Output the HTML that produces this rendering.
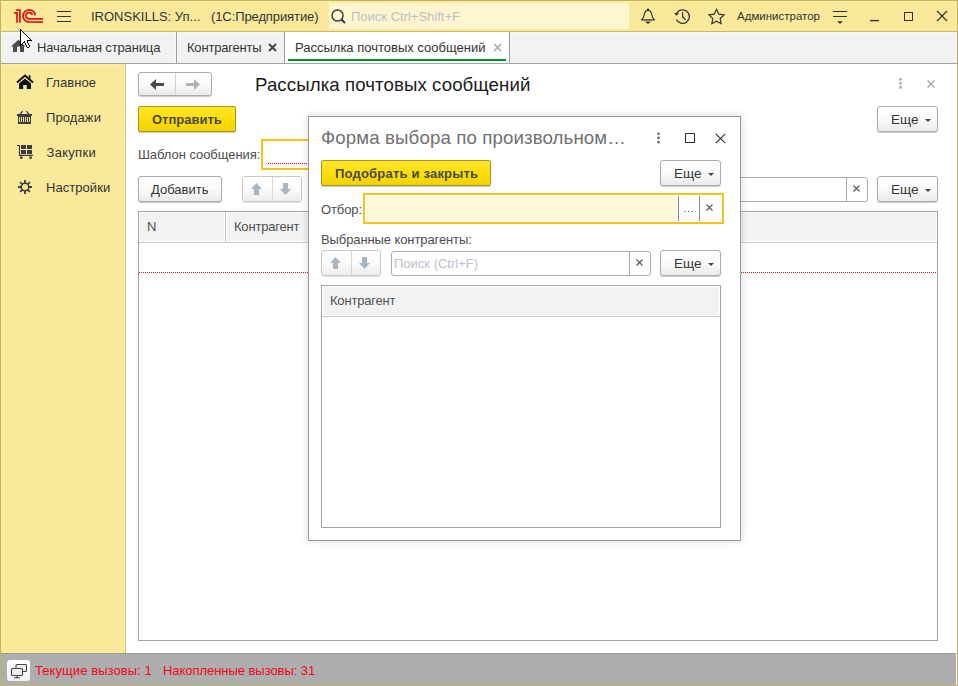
<!DOCTYPE html>
<html><head><meta charset="utf-8">
<style>
*{box-sizing:border-box;margin:0;padding:0}
html,body{width:958px;height:686px;overflow:hidden;background:#fff;font-family:"Liberation Sans",sans-serif;font-size:13px;line-height:15px;color:#333}
div,svg{position:absolute}
.t{white-space:nowrap}
.btn{color:#3A3A3A;border:1px solid #ABABAB;border-radius:3px;background:linear-gradient(#FFFFFF 0%,#FBFBFB 50%,#EAEAEA 100%);box-shadow:0 1px 1px rgba(0,0,0,.22)}
.dbtn{border:1px solid #C9C9C9;border-radius:3px;background:linear-gradient(#FFFFFF 0%,#FBFBFB 50%,#EDEDED 100%);box-shadow:0 1px 1px rgba(0,0,0,.12)}
.ybtn{border:1px solid #A8961C;border-radius:2px;background:linear-gradient(#FFE62A 0%,#FCDD0A 55%,#F3D200 100%);box-shadow:0 1px 1px rgba(0,0,0,.22)}
.bold{font-weight:bold;color:#4A4A4A}
</style></head><body>
<!-- ===== HEADER ===== -->
<div style="left:0;top:0;width:958px;height:32px;background:#FAE99A;border-bottom:1px solid #C8B868"></div>
<div style="left:1px;top:1px;width:957px;height:1px;background:#FDF0A4"></div>
<!-- 1C logo -->
<svg style="left:0;top:0" width="50" height="30" viewBox="0 0 50 30">
  <g fill="none" stroke="#E2151C" stroke-width="1.75">
    <path d="M14 12.9H17V22.8"/>
    <path d="M16.2 10H19.9V22.8"/>
    <path d="M35.2 15.3A6.1 6.1 0 1 0 29.2 22H43"/>
    <path d="M32.2 15.2A3.1 3.1 0 1 0 29.2 18.9H43"/>
  </g>
</svg>
<!-- hamburger -->
<svg style="left:57px;top:11px" width="14" height="11"><path d="M0 0.5H14M0 5.5H14M0 10.5H14" stroke="#333" stroke-width="1"/></svg>
<div class="t" style="left:91px;top:9px;color:#333;letter-spacing:0px">IRONSKILLS: Уп...</div>
<div class="t" style="left:211px;top:9px;color:#333;letter-spacing:-0.1px">(1С:Предприятие)</div>
<!-- search -->
<div style="left:329px;top:3px;width:300px;height:26px;background:#FFF6D0;border-radius:2px"></div>
<svg style="left:330px;top:8px" width="18" height="18"><g fill="none" stroke="#333" stroke-width="1.4"><circle cx="7.5" cy="7.5" r="5.5"/><path d="M11.5 11.5L15 15" stroke-width="2"/></g></svg>
<div class="t" style="left:351px;top:9px;color:#BDBDC4">Поиск Ctrl+Shift+F</div>
<!-- bell -->
<svg style="left:639px;top:7px" width="18" height="18"><path fill="none" stroke="#333" stroke-width="1.15" stroke-linejoin="round" d="M2.5 12.8H15.5L13.6 10.5L12.2 5.8C11.8 4.2 10.6 3.4 9 3.4C7.4 3.4 6.2 4.2 5.8 5.8L4.4 10.5Z"/><circle cx="9" cy="2.6" r="1.1" fill="#333"/><path d="M5.8 14.4H12.2L9 17z" fill="#333"/></svg>
<!-- history -->
<svg style="left:672px;top:7px" width="20" height="18"><g fill="none" stroke="#333" stroke-width="1.25"><path d="M4.6 6.4A6.8 6.8 0 1 1 4.4 12.4"/><path d="M10.6 5.2V10L13.6 12.8"/></g><path d="M2 6H7L4.5 8.8z" fill="#333"/></svg>
<!-- star -->
<svg style="left:707.5px;top:8px" width="18" height="18"><path fill="none" stroke="#333" stroke-width="1.15" stroke-linejoin="miter" d="M8.50 1.30 L10.79 6.14 L16.11 6.83 L12.21 10.51 L13.20 15.77 L8.50 13.20 L3.80 15.77 L4.79 10.51 L0.89 6.83 L6.21 6.14Z"/></svg>
<div class="t" style="left:737px;top:9px;color:#333;font-size:11.5px">Администратор</div>
<!-- filter -->
<svg style="left:832px;top:8px" width="16" height="17"><path d="M1 3.5H15M1 8.5H15" stroke="#333" stroke-width="1.2"/><path d="M5 13.2H11L8 16z" fill="#333"/></svg>
<!-- window controls -->
<svg style="left:870px;top:18px" width="9" height="4"><path d="M0 2.6H9" stroke="#333" stroke-width="1.4"/></svg>
<div style="left:904px;top:12px;width:9px;height:9px;border:1.3px solid #333"></div>
<svg style="left:936px;top:10px" width="12" height="12"><path d="M1 1L11 11M11 1L1 11" stroke="#333" stroke-width="1.2"/></svg>

<!-- ===== TABS ===== -->
<div style="left:0;top:32px;width:958px;height:32px;background:#F2F2F2;border-bottom:1px solid #A4A4A4"></div>
<div style="left:1px;top:32px;width:957px;height:1px;background:#F8F8FA"></div>
<svg style="left:10px;top:39px" width="18" height="15"><path d="M1 7.5L8.4 0.8L15.6 7.5H14V13H10V7.5H7V13H3V7.5z" fill="#4A4A4A"/></svg>
<div class="t" style="left:37px;top:40px;letter-spacing:-0.14px">Начальная страница</div>
<div style="left:175px;top:32px;width:3px;height:31px;background:#FAFAFA;border-left:1px solid #F8F8F8"></div>
<div style="left:176px;top:32px;width:1px;height:31px;background:#9C9C9C"></div>
<div class="t" style="left:187px;top:40px;letter-spacing:-0.2px">Контрагенты</div>
<svg style="left:268px;top:43px" width="9" height="9"><path d="M1 1L8 8M8 1L1 8" stroke="#444" stroke-width="1.9"/></svg>
<div style="left:284px;top:32px;width:226px;height:31px;background:#FFFFFF;border-left:1px solid #9C9C9C;border-right:1px solid #9C9C9C"></div>
<div class="t" style="left:295px;top:40px">Рассылка почтовых сообщений</div>
<svg style="left:493px;top:43px" width="9" height="9"><path d="M1 1L8 8M8 1L1 8" stroke="#ABABAB" stroke-width="1.6"/></svg>
<div style="left:288px;top:59px;width:218px;height:2px;background:#00912F"></div>

<!-- ===== SIDEBAR ===== -->
<div style="left:0;top:64px;width:126px;height:589px;background:#FAE99A;border-right:1px solid #D3C27A"></div>
<div style="left:1px;top:64px;width:124px;height:1px;background:#FEF0A2"></div>
<div style="left:124px;top:64px;width:1px;height:589px;background:#FCEDA0"></div>
<svg style="left:16px;top:74px" width="18" height="16"><path d="M1 8.4L9 1.6L17 8.4" fill="none" stroke="#111" stroke-width="2"/><path d="M12.7 1.2h1.7v4.2h-1.7z" fill="#111"/><path d="M9 4.6L3 9.6V15H7.2V11H10.8V15H15V9.6Z" fill="#111"/></svg>
<div class="t" style="left:46px;top:75px;letter-spacing:0.05px">Главное</div>
<svg style="left:17px;top:110px" width="16" height="15" shape-rendering="crispEdges"><g fill="#3C3C44"><rect x="0" y="4" width="15" height="2"/><rect x="1" y="6" width="13" height="8"/></g><path d="M3.2 4L5.7 1.1M11.8 4L9.3 1.1" stroke="#3C3C44" stroke-width="1.3" shape-rendering="auto"/><g fill="#FAE99A"><rect x="2" y="7" width="1" height="5"/><rect x="4" y="7" width="1" height="5"/><rect x="6" y="7" width="1" height="5"/><rect x="8" y="7" width="1" height="5"/><rect x="10" y="7" width="1" height="5"/><rect x="12" y="7" width="1" height="5"/></g></svg>
<div class="t" style="left:46px;top:110px;letter-spacing:0.1px">Продажи</div>
<svg style="left:17px;top:145px" width="17" height="15"><path d="M0 0.5H2.5V10.4H16" fill="none" stroke="#3C3C44" stroke-width="1.15"/><g fill="#3C3C44" shape-rendering="crispEdges"><rect x="4" y="0" width="5" height="4"/><rect x="10" y="0" width="5" height="4"/><rect x="4" y="5" width="5" height="4"/><rect x="10" y="5" width="5" height="4"/></g><g fill="#3C3C44"><circle cx="4.3" cy="12.7" r="1.35"/><circle cx="13.6" cy="12.7" r="1.35"/></g></svg>
<div class="t" style="left:46.5px;top:145px;letter-spacing:0.3px">Закупки</div>
<svg style="left:17.1px;top:179px" width="16" height="16"><g fill="none" stroke="#3C3C44"><circle cx="8" cy="8" r="3.8" stroke-width="1.6"/><path d="M12.00 8.00L14.90 8.00M10.83 10.83L12.88 12.88M8.00 12.00L8.00 14.90M5.17 10.83L3.12 12.88M4.00 8.00L1.10 8.00M5.17 5.17L3.12 3.12M8.00 4.00L8.00 1.10M10.83 5.17L12.88 3.12" stroke-width="1.8"/></g></svg>
<div class="t" style="left:46px;top:180px;letter-spacing:0.05px">Настройки</div>

<!-- ===== CONTENT ===== -->
<!-- nav -->
<div class="btn" style="left:138px;top:72px;width:74px;height:24px"></div>
<div style="left:175px;top:73px;width:1px;height:22px;background:#D2D2D2"></div>
<svg style="left:149px;top:78px" width="16" height="13"><path d="M1 6.5L7 1V5H15V8H7V12Z" fill="#4A4A4A"/></svg>
<svg style="left:185px;top:78px" width="16" height="13"><path d="M15 6.5L9 1V5H1V8H9V12Z" fill="#B2B2B2"/></svg>
<div class="t" style="left:255px;top:74px;font-size:18.67px;line-height:21px;color:#1A1A1A;letter-spacing:0.08px">Рассылка почтовых сообщений</div>
<svg style="left:898px;top:77px" width="5" height="14"><g fill="#ABABAB"><circle cx="2.5" cy="2.3" r="1.4"/><circle cx="2.5" cy="6.4" r="1.4"/><circle cx="2.5" cy="10.5" r="1.4"/></g></svg>
<svg style="left:926.5px;top:79.5px" width="8" height="8"><path d="M0.5 0.5L7.5 7.5M7.5 0.5L0.5 7.5" stroke="#A0A0A0" stroke-width="1.1"/></svg>
<div class="ybtn" style="left:138px;top:106px;width:98px;height:26px"></div>
<div class="t bold" style="left:152px;top:112px">Отправить</div>
<div class="btn" style="left:877px;top:106px;width:61px;height:26px"></div>
<div class="t" style="left:891px;top:112px;font-size:13.5px">Еще</div>
<svg style="left:925px;top:119px" width="6" height="3"><path d="M0 0H6L3 3z" fill="#444"/></svg>
<div class="t" style="left:138px;top:147px;color:#4E4E4E;letter-spacing:-0.05px">Шаблон сообщения:</div>
<div style="left:261px;top:139px;width:400px;height:31px;border:2px solid #F5C31A;background:#fff"></div>
<div style="left:268px;top:163px;width:300px;height:1px;background:repeating-linear-gradient(90deg,#F01818 0 1px,transparent 1px 2px)"></div>
<div class="btn" style="left:138px;top:176px;width:84px;height:26px"></div>
<div class="t" style="left:151px;top:182px;letter-spacing:0px">Добавить</div>
<div class="dbtn" style="left:242px;top:176px;width:60px;height:26px"></div>
<div style="left:272px;top:177px;width:1px;height:24px;background:#D6D6D6"></div>
<svg style="left:250px;top:182px" width="13" height="14"><path d="M6.5 1L12 7H9V13H4V7H1z" fill="#A9B6C2"/></svg>
<svg style="left:279px;top:182px" width="13" height="14"><path d="M6.5 13L12 7H9V1H4V7H1z" fill="#A9B6C2"/></svg>
<div style="left:600px;top:177px;width:268px;height:25px;border:1px solid #ABABAB;border-radius:3px;background:#fff"></div>
<div style="left:846px;top:178px;width:1px;height:23px;background:#ABABAB"></div>
<svg style="left:853px;top:185px" width="7" height="7"><path d="M0.5 0.5L6.5 6.5M6.5 0.5L0.5 6.5" stroke="#5A5A5A" stroke-width="1.15"/></svg>
<div class="btn" style="left:877px;top:176px;width:61px;height:26px"></div>
<div class="t" style="left:891px;top:182px;font-size:13.5px">Еще</div>
<svg style="left:925px;top:189px" width="6" height="3"><path d="M0 0H6L3 3z" fill="#444"/></svg>
<!-- main table -->
<div style="left:138px;top:211px;width:800px;height:430px;border:1px solid #A4A4A4;background:#fff"></div>
<div style="left:140px;top:213px;width:84px;height:28px;background:#F2F2F2"></div>
<div style="left:225px;top:212px;width:1px;height:30px;background:#C8C8C8"></div>
<div style="left:227px;top:213px;width:709px;height:28px;background:#F2F2F2"></div>
<div style="left:139px;top:242px;width:798px;height:1px;background:#C8C8C8"></div>
<div class="t" style="left:147px;top:219px;color:#505050">N</div>
<div class="t" style="left:234px;top:219px;color:#505050;letter-spacing:-0.2px">Контрагент</div>
<div style="left:139px;top:272px;width:797px;height:1px;background:repeating-linear-gradient(90deg,#F01818 0 1px,transparent 1px 2px)"></div>

<!-- ===== DIALOG ===== -->
<div style="left:308px;top:116px;width:433px;height:425px;background:#fff;border:1px solid #999;box-shadow:0 0 8px rgba(0,0,0,.16)"></div>
<div class="t" style="left:321px;top:127px;font-size:18.67px;line-height:21px;color:#707070;letter-spacing:0.12px">Форма выбора по произвольном…</div>
<svg style="left:656px;top:132px" width="5" height="12"><g fill="#707070"><circle cx="2.5" cy="1.8" r="1.4"/><circle cx="2.5" cy="6" r="1.4"/><circle cx="2.5" cy="10.2" r="1.4"/></g></svg>
<div style="left:685px;top:133px;width:9.5px;height:9.5px;border:1.4px solid #333"></div>
<svg style="left:714.5px;top:132.5px" width="11" height="11"><path d="M0.8 0.8L10.2 10.2M10.2 0.8L0.8 10.2" stroke="#333" stroke-width="1.2"/></svg>
<div class="ybtn" style="left:321px;top:160px;width:170px;height:26px"></div>
<div class="t bold" style="left:335px;top:166px;letter-spacing:0.2px">Подобрать и закрыть</div>
<div class="btn" style="left:660px;top:160px;width:61px;height:26px"></div>
<div class="t" style="left:674px;top:166px;font-size:13.5px">Еще</div>
<svg style="left:708px;top:173px" width="6" height="3"><path d="M0 0H6L3 3z" fill="#444"/></svg>
<div class="t" style="left:321px;top:202px;color:#4E4E4E;letter-spacing:-0.1px">Отбор:</div>
<div style="left:363px;top:193px;width:361px;height:31px;border:2px solid #F5C31A;background:#fff"></div>
<div style="left:366px;top:196px;width:311px;height:25px;background:#FFF7DA;border-radius:2px"></div>
<div style="left:678px;top:196px;width:1px;height:25px;background:#8A8A8A"></div>
<div style="left:699px;top:196px;width:1px;height:25px;background:#8A8A8A"></div>
<svg style="left:684px;top:210px" width="10" height="3"><g fill="#333"><rect x="0.5" y="1" width="1" height="1"/><rect x="4" y="1" width="1" height="1"/><rect x="7.5" y="1" width="1" height="1"/></g></svg>
<svg style="left:706px;top:204px" width="7" height="7"><path d="M0.5 0.5L6.5 6.5M6.5 0.5L0.5 6.5" stroke="#5A5A5A" stroke-width="1.15"/></svg>
<div class="t" style="left:321px;top:232px;color:#4E4E4E;letter-spacing:-0.1px">Выбранные контрагенты:</div>
<div class="dbtn" style="left:321px;top:250px;width:60px;height:26px"></div>
<div style="left:351px;top:251px;width:1px;height:24px;background:#D6D6D6"></div>
<svg style="left:329px;top:256px" width="13" height="14"><path d="M6.5 1L12 7H9V13H4V7H1z" fill="#A9B6C2"/></svg>
<svg style="left:358px;top:256px" width="13" height="14"><path d="M6.5 13L12 7H9V1H4V7H1z" fill="#A9B6C2"/></svg>
<div style="left:391px;top:251px;width:260px;height:25px;border:1px solid #ABABAB;border-radius:3px;background:#fff"></div>
<div class="t" style="left:394px;top:256px;color:#BCC0CC">Поиск (Ctrl+F)</div>
<div style="left:629px;top:252px;width:1px;height:23px;background:#ABABAB"></div>
<svg style="left:636px;top:259px" width="7" height="7"><path d="M0.5 0.5L6.5 6.5M6.5 0.5L0.5 6.5" stroke="#5A5A5A" stroke-width="1.15"/></svg>
<div class="btn" style="left:660px;top:250px;width:61px;height:26px"></div>
<div class="t" style="left:674px;top:256px;font-size:13.5px">Еще</div>
<svg style="left:708px;top:263px" width="6" height="3"><path d="M0 0H6L3 3z" fill="#444"/></svg>
<!-- dialog table -->
<div style="left:321px;top:285px;width:400px;height:243px;border:1px solid #A4A4A4;background:#fff"></div>
<div style="left:323px;top:287px;width:396px;height:28px;background:#F2F2F2"></div>
<div style="left:322px;top:316px;width:398px;height:1px;background:#C8C8C8"></div>
<div class="t" style="left:330px;top:293px;color:#505050;letter-spacing:-0.2px">Контрагент</div>

<!-- ===== STATUS ===== -->
<div style="left:0;top:653px;width:956px;height:33px;background:#AEAEAE;border-top:1px solid #9A9A9A"></div>
<div style="left:7px;top:660px;width:23px;height:21px;border-radius:3px;background:linear-gradient(#FFFFFF,#F0F0F0)"></div>
<svg style="left:10px;top:663px" width="18" height="16"><g fill="#EEEEEE" stroke="#444" stroke-width="1.1"><rect x="6" y="1.5" width="10.5" height="7" rx="1"/><rect x="1.5" y="5.5" width="11" height="7" rx="1"/></g><path d="M7 12.5V14.5M4 14.8H10" stroke="#444" stroke-width="1.1"/></svg>
<div class="t" style="left:35px;top:663px;color:#F0081A;letter-spacing:0.08px">Текущие вызовы: 1</div>
<div class="t" style="left:163px;top:663px;color:#F0081A;letter-spacing:-0.05px">Накопленные вызовы: 31</div>

<!-- cursor -->
<svg style="left:20px;top:29px" width="12" height="19" shape-rendering="crispEdges"><rect x="0" y="0" width="1" height="1" fill="#000"/><rect x="0" y="1" width="2" height="1" fill="#000"/><rect x="0" y="2" width="1" height="1" fill="#000"/><rect x="1" y="2" width="1" height="1" fill="#fff"/><rect x="2" y="2" width="1" height="1" fill="#000"/><rect x="0" y="3" width="1" height="1" fill="#000"/><rect x="1" y="3" width="2" height="1" fill="#fff"/><rect x="3" y="3" width="1" height="1" fill="#000"/><rect x="0" y="4" width="1" height="1" fill="#000"/><rect x="1" y="4" width="3" height="1" fill="#fff"/><rect x="4" y="4" width="1" height="1" fill="#000"/><rect x="0" y="5" width="1" height="1" fill="#000"/><rect x="1" y="5" width="4" height="1" fill="#fff"/><rect x="5" y="5" width="1" height="1" fill="#000"/><rect x="0" y="6" width="1" height="1" fill="#000"/><rect x="1" y="6" width="5" height="1" fill="#fff"/><rect x="6" y="6" width="1" height="1" fill="#000"/><rect x="0" y="7" width="1" height="1" fill="#000"/><rect x="1" y="7" width="6" height="1" fill="#fff"/><rect x="7" y="7" width="1" height="1" fill="#000"/><rect x="0" y="8" width="1" height="1" fill="#000"/><rect x="1" y="8" width="7" height="1" fill="#fff"/><rect x="8" y="8" width="1" height="1" fill="#000"/><rect x="0" y="9" width="1" height="1" fill="#000"/><rect x="1" y="9" width="8" height="1" fill="#fff"/><rect x="9" y="9" width="1" height="1" fill="#000"/><rect x="0" y="10" width="1" height="1" fill="#000"/><rect x="1" y="10" width="9" height="1" fill="#fff"/><rect x="10" y="10" width="1" height="1" fill="#000"/><rect x="0" y="11" width="1" height="1" fill="#000"/><rect x="1" y="11" width="6" height="1" fill="#fff"/><rect x="7" y="11" width="5" height="1" fill="#000"/><rect x="0" y="12" width="1" height="1" fill="#000"/><rect x="1" y="12" width="3" height="1" fill="#fff"/><rect x="4" y="12" width="1" height="1" fill="#000"/><rect x="5" y="12" width="2" height="1" fill="#fff"/><rect x="7" y="12" width="1" height="1" fill="#000"/><rect x="0" y="13" width="1" height="1" fill="#000"/><rect x="1" y="13" width="2" height="1" fill="#fff"/><rect x="3" y="13" width="2" height="1" fill="#000"/><rect x="5" y="13" width="2" height="1" fill="#fff"/><rect x="7" y="13" width="1" height="1" fill="#000"/><rect x="0" y="14" width="1" height="1" fill="#000"/><rect x="1" y="14" width="1" height="1" fill="#fff"/><rect x="2" y="14" width="1" height="1" fill="#000"/><rect x="5" y="14" width="1" height="1" fill="#000"/><rect x="6" y="14" width="2" height="1" fill="#fff"/><rect x="8" y="14" width="1" height="1" fill="#000"/><rect x="0" y="15" width="2" height="1" fill="#000"/><rect x="5" y="15" width="1" height="1" fill="#000"/><rect x="6" y="15" width="2" height="1" fill="#fff"/><rect x="8" y="15" width="1" height="1" fill="#000"/><rect x="0" y="16" width="1" height="1" fill="#000"/><rect x="6" y="16" width="1" height="1" fill="#000"/><rect x="7" y="16" width="2" height="1" fill="#fff"/><rect x="9" y="16" width="1" height="1" fill="#000"/><rect x="6" y="17" width="1" height="1" fill="#000"/><rect x="7" y="17" width="2" height="1" fill="#fff"/><rect x="9" y="17" width="1" height="1" fill="#000"/><rect x="7" y="18" width="2" height="1" fill="#000"/></svg>
<!-- frame -->
<div style="left:0;top:0;width:958px;height:686px;border:1px solid #C3B262"></div>
<div style="left:956px;top:64px;width:1px;height:621px;background:#fff"></div>
</body></html>
